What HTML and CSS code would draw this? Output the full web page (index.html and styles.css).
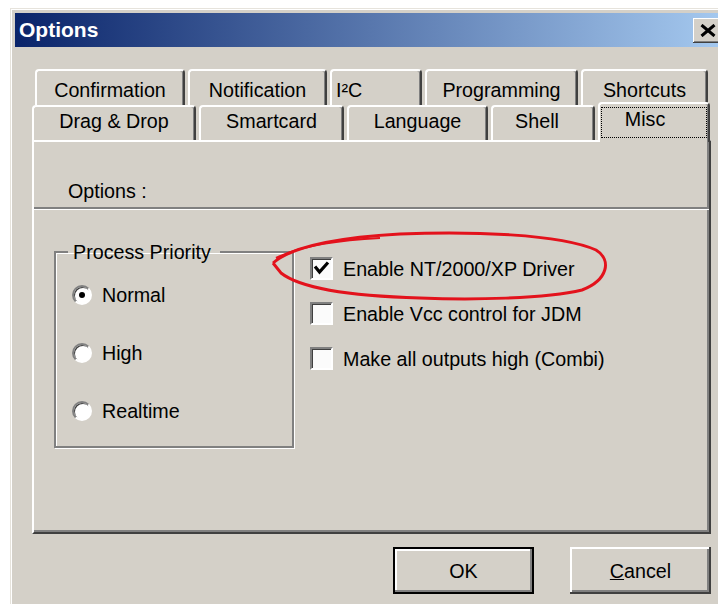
FILE: index.html
```html
<!DOCTYPE html>
<html lang="en">
<head>
<meta charset="utf-8">
<title>Options</title>
<link rel="stylesheet" href="styles.css">
</head>
<body>
<div class="window">
  <div class="titlebar">
    <span class="title">Options</span>
    <button class="close" aria-label="Close">
      <svg width="16" height="13" viewBox="0 0 16 13"><path d="M1.5 1 L14.5 12 M14.5 1 L1.5 12" stroke="#000" stroke-width="3"/></svg>
    </button>
  </div>
  <div class="client">
    <div class="tabctl">
      <div class="tabrow row-back">
        <div class="tab w-confirm">Confirmation</div>
        <div class="tab w-notify">Notification</div>
        <div class="tab w-i2c">I²C</div>
        <div class="tab w-prog">Programming</div>
        <div class="tab w-short">Shortcuts</div>
      </div>
      <div class="tabrow row-front">
        <div class="tab w-drag">Drag &amp; Drop</div>
        <div class="tab w-smart">Smartcard</div>
        <div class="tab w-lang">Language</div>
        <div class="tab w-shell">Shell</div>
        <div class="tab tab-sel w-misc"><span class="focus">Misc</span></div>
      </div>
      <div class="panel">
        <div class="section-label">Options :</div>
        <div class="separator"></div>
        <div class="panel-body">
          <fieldset class="group">
            <legend>Process Priority</legend>
            <label class="radio-row"><span class="radio checked"></span>Normal</label>
            <label class="radio-row"><span class="radio"></span>High</label>
            <label class="radio-row"><span class="radio"></span>Realtime</label>
          </fieldset>
          <div class="checks">
            <label class="check-row"><span class="checkbox"><svg width="19" height="19" viewBox="0 0 19 19"><polyline points="3,7.5 7.5,13 16,3.5" fill="none" stroke="#000" stroke-width="3.2"/></svg></span>Enable NT/2000/XP Driver</label>
            <label class="check-row"><span class="checkbox"></span>Enable Vcc control for JDM</label>
            <label class="check-row"><span class="checkbox"></span>Make all outputs high (Combi)</label>
          </div>
        </div>
        <!-- hand-drawn ring around the driver option -->
        <svg class="mark" width="679" height="394" viewBox="32 140 679 394">
          <path d="M273,263 C290,248 330,238 400,234 C470,231 560,234 596,250 C612,260 608,280 582,290 C545,299 470,300 420,298 C350,296 300,288 281,273 L273,263" fill="none" stroke="#e3121c" stroke-width="3"/>
          <path d="M276,258 C300,246 340,240 380,238" fill="none" stroke="#e3121c" stroke-width="2"/>
        </svg>
      </div>
    </div>
    <div class="buttons">
      <button class="btn btn-default">OK</button>
      <button class="btn"><u>C</u>ancel</button>
    </div>
  </div>
</div>
</body>
</html>
```
FILE: styles.css
```css
html, body {
  margin: 0;
  padding: 0;
  overflow: hidden;
}

body {
  width: 718px;
  height: 604px;
  background: #fff;
  color: #000;
  font-family: "Liberation Sans", Arial, sans-serif;
  font-size: 19.7px;
  line-height: 22px;
}

/* window frame */
.window {
  box-sizing: border-box;
  width: 722px;
  height: 600px;
  margin: 8px 0 0 10px;
  padding: 5px;
  background: #d4d0c8;
  box-shadow: inset 1px 1px 0 #e6e3dc, inset 2px 2px 0 #fff;
}

.titlebar {
  display: flex;
  align-items: center;
  height: 34px;
  background: linear-gradient(to right, #0a246a, #a6caf0);
  color: #fff;
}

.title {
  padding-left: 4px;
  font-weight: bold;
  font-size: 21px;
}

.close {
  display: flex;
  align-items: center;
  justify-content: flex-start;
  box-sizing: border-box;
  width: 30px;
  height: 25px;
  margin-left: auto;
  margin-right: 4px;
  padding: 0 0 0 7px;
  border: 0;
  background: #d4d0c8;
  box-shadow: inset -1px -1px 0 #404040, inset 1px 1px 0 #fff, inset -2px -2px 0 #808080;
}

.client {
  padding: 22px 16px 0 17px;
}

/* tab control */
.tabctl {
  display: flex;
  flex-direction: column;
}

.tabrow {
  display: flex;
  gap: 3px;
}

.row-back {
  height: 36px;
  padding-left: 3px;
}

.row-front {
  height: 35px;
}

.tab {
  box-sizing: border-box;
  height: 100%;
  border-top: 2px solid #fff;
  border-left: 2px solid #fff;
  border-right: 2px solid #404040;
  border-radius: 4px 4px 0 0;
  box-shadow: inset -1px 0 0 #808080;
  background: #d4d0c8;
  text-align: center;
  white-space: nowrap;
}

.row-back .tab { padding-top: 8px; }
.row-front .tab { padding-top: 3px; }

.w-confirm { width: 150px; }
.w-notify { width: 139px; }
.w-i2c { width: 92px; text-align: left; padding-left: 4px; }
.w-prog { width: 153px; }
.w-short { width: 127px; }
.w-drag { width: 164px; }
.w-smart { width: 145px; }
.w-lang { width: 141px; }
.w-shell { width: 104px; padding-right: 12px; }
.w-misc { width: 112px; }

.row-front .tab-sel {
  position: relative;
  z-index: 1;
  height: 40px;
  margin-top: -3px;
  padding: 3px 1px 4px;
}

.focus {
  display: block;
  box-sizing: border-box;
  height: 100%;
  padding-right: 18px;
  border: 1px dotted #000;
}

.panel {
  position: relative;
  box-sizing: border-box;
  width: 679px;
  height: 394px;
  border-top: 2px solid #fff;
  border-left: 2px solid #fff;
  border-right: 2px solid #404040;
  border-bottom: 2px solid #404040;
  box-shadow: inset -2px -2px 0 #808080;
}

.section-label {
  padding: 38px 0 0 34px;
}

.separator {
  margin-top: 5px;
  border-top: 2px solid #808080;
  border-bottom: 1px solid #fff;
}

.panel-body {
  display: flex;
  align-items: flex-start;
  margin-top: 31px;
  padding-left: 20px;
}

/* group box */
.group {
  box-sizing: border-box;
  width: 240px;
  height: 207px;
  margin: 0;
  padding: 3px 0 0 16px;
  border: 2px solid #808080;
  box-shadow: 1px 1px 0 #fff, inset 1px 1px 0 #fff;
}

.group legend {
  margin-left: -4px;
  padding: 0 9px 0 5px;
}

.radio-row {
  display: flex;
  align-items: center;
  height: 58px;
}

.radio {
  position: relative;
  flex: none;
  box-sizing: border-box;
  width: 20px;
  height: 20px;
  margin-right: 10px;
  border: 2px solid;
  border-color: #808080 #fff #fff #808080;
  border-radius: 50%;
  background: #fff;
  box-shadow: inset 1px 1px 0 #404040;
}

.radio.checked::after {
  content: "";
  position: absolute;
  left: 5px;
  top: 5px;
  width: 6px;
  height: 6px;
  border-radius: 50%;
  background: #000;
}

.checks {
  margin-left: 16px;
  padding-top: 5px;
}

.check-row {
  display: flex;
  align-items: center;
  height: 45px;
  white-space: nowrap;
}

.checkbox {
  display: flex;
  flex: none;
  box-sizing: border-box;
  width: 23px;
  height: 23px;
  margin-right: 10px;
  border: 2px solid;
  border-color: #808080 #fff #fff #808080;
  background: #fbfbfb;
  box-shadow: inset 1px 1px 0 #404040;
}

.mark {
  position: absolute;
  left: -2px;
  top: -2px;
  overflow: visible;
  pointer-events: none;
}

/* dialog buttons */
.buttons {
  display: flex;
  justify-content: flex-end;
  gap: 36px;
  margin-top: 13px;
}

.btn {
  box-sizing: border-box;
  width: 141px;
  height: 47px;
  padding: 0;
  border: 0;
  background: #d4d0c8;
  color: #000;
  font: inherit;
  box-shadow: inset -2px -2px 0 #404040, inset 2px 2px 0 #fff, inset -4px -4px 0 #808080;
}

.btn-default {
  border: 2px solid #000;
  box-shadow: inset -2px -2px 0 #808080, inset 2px 2px 0 #fff;
}
```
